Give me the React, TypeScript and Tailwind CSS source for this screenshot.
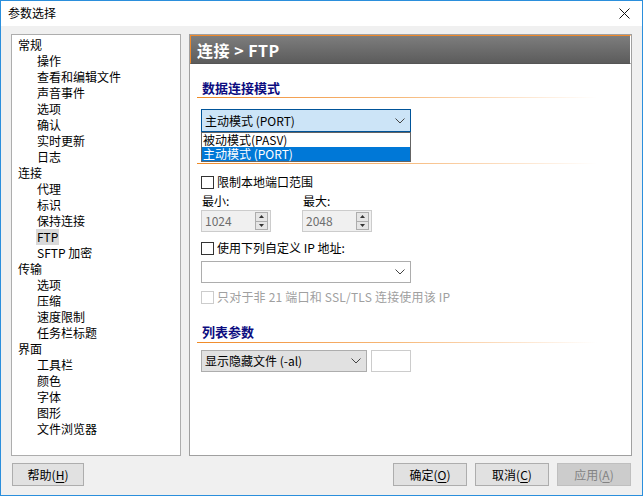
import React from 'react';

type TreeItem = { label: string; level: 0 | 1; selected?: boolean };

const tree: TreeItem[] = [
  { label: '常规', level: 0 },
  { label: '操作', level: 1 },
  { label: '查看和编辑文件', level: 1 },
  { label: '声音事件', level: 1 },
  { label: '选项', level: 1 },
  { label: '确认', level: 1 },
  { label: '实时更新', level: 1 },
  { label: '日志', level: 1 },
  { label: '连接', level: 0 },
  { label: '代理', level: 1 },
  { label: '标识', level: 1 },
  { label: '保持连接', level: 1 },
  { label: 'FTP', level: 1, selected: true },
  { label: 'SFTP 加密', level: 1 },
  { label: '传输', level: 0 },
  { label: '选项', level: 1 },
  { label: '压缩', level: 1 },
  { label: '速度限制', level: 1 },
  { label: '任务栏标题', level: 1 },
  { label: '界面', level: 0 },
  { label: '工具栏', level: 1 },
  { label: '颜色', level: 1 },
  { label: '字体', level: 1 },
  { label: '图形', level: 1 },
  { label: '文件浏览器', level: 1 },
];

const Chevron = () => (
  <svg width="10" height="6" viewBox="0 0 10 6" className="shrink-0">
    <polyline points="0.5,0.5 5,5 9.5,0.5" fill="none" stroke="#444" strokeWidth="1" />
  </svg>
);

const Checkbox = ({ disabled }: { disabled?: boolean }) => (
  <span
    className={`inline-block w-[13px] h-[13px] border shrink-0 bg-white ${
      disabled ? 'border-[#cccccc]' : 'border-[#333333]'
    }`}
  />
);

const Spin = ({ value }: { value: string }) => (
  <div className="w-[70px] h-[22px] border border-[#cccccc] bg-[#f0f0f0] flex items-center justify-between pl-[3px] pr-[2px]">
    <span className="text-[#6d6d6d]">{value}</span>
    <div className="w-[13px] h-[18px] flex flex-col border border-[#adadad] bg-[#e5e5e5]">
      <div className="flex-1 flex items-center justify-center border-b border-[#adadad]">
        <svg width="5" height="3" viewBox="0 0 5 3"><polygon points="2.5,0 5,3 0,3" fill="#333" /></svg>
      </div>
      <div className="flex-1 flex items-center justify-center">
        <svg width="5" height="3" viewBox="0 0 5 3"><polygon points="0,0 5,0 2.5,3" fill="#333" /></svg>
      </div>
    </div>
  </div>
);

const SectionLine = () => (
  <div className="h-px w-[400px] bg-linear-to-r from-[#f08a24] via-[#f6b878] to-white" />
);

const Button = ({ label, hotkey, disabled, width }: { label: string; hotkey: string; disabled?: boolean; width: string }) => (
  <div
    className={`${width} h-[23px] flex items-center justify-center border ${
      disabled ? 'bg-[#cccccc] border-[#bfbfbf] text-[#838383]' : 'bg-[#e1e1e1] border-[#adadad] text-black'
    }`}
  >
    {label}(<span className="underline underline-offset-2">{hotkey}</span>)
  </div>
);

const App: React.FC = () => {
  return (
    <div className="w-[644px] h-[499px] bg-white font-['Noto_Sans_CJK_SC','Microsoft_YaHei',sans-serif] text-[12px] leading-[16px] text-black">
      <div className="w-[643px] h-[496px] border border-[#2b8fdc] bg-[#f0f0f0] flex flex-col">
        {/* Title bar */}
        <div className="h-[25px] bg-white flex items-center justify-between pl-[7px] pr-[12px] shrink-0">
          <span className="text-[12px] -mt-[1px]">参数选择</span>
          <svg width="11" height="11" viewBox="0 0 11 11">
            <line x1="0.5" y1="0.5" x2="10.5" y2="10.5" stroke="#111" strokeWidth="1" />
            <line x1="10.5" y1="0.5" x2="0.5" y2="10.5" stroke="#111" strokeWidth="1" />
          </svg>
        </div>

        <div className="flex-1 px-[10px] pt-[8px] flex flex-col">
          <div className="flex gap-[8px] h-[422px]">
            {/* Tree */}
            <div className="w-[170px] h-full bg-white border border-[#adadad] pt-[2px] pl-[5px]">
              {tree.map((item, i) => (
                <div key={i} className={`h-[16px] flex items-center ${item.level === 1 ? 'pl-[19px]' : ''}`}>
                  <span className={`px-[1px] ${item.selected ? 'bg-[#d9d9d9]' : ''}`}>{item.label}</span>
                </div>
              ))}
            </div>

            {/* Right panel */}
            <div className="w-[443px] h-full bg-white border border-[#a0a0a0] flex flex-col">
              <div className="h-[29px] border-t border-l border-[#f0892a] border-r-white border-b-[#555] border-r border-b bg-linear-to-b from-[#7d7d7d] to-[#5c5c5c] flex items-center pl-[6px]">
                <span className="text-white font-bold text-[16px] leading-[20px] tracking-[0.5px]">连接 &gt; FTP</span>
              </div>

              <div className="pl-[7px] flex flex-col">
                <div className="mt-[16px] pl-[5px] h-[16px] flex items-center text-[13px] font-bold text-[#0c0c80]">数据连接模式</div>
                <div className="mt-[1px]"><SectionLine /></div>

                <div className="relative mt-[11px] ml-[4px] w-[210px]">
                  <div className="h-[23px] border border-[#005499] bg-[#cce4f7] flex items-center justify-between pl-[3px] pr-[5px]">
                    <span>主动模式 (PORT)</span>
                    <Chevron />
                  </div>
                  <div className="absolute left-0 top-full w-[210px] border border-[#646464] bg-white z-10">
                    <div className="h-[14px] leading-[14px] flex items-center pl-[1px]">被动模式(PASV)</div>
                    <div className="h-[14px] leading-[14px] flex items-center pl-[1px] bg-[#0078d7] text-white">主动模式 (PORT)</div>
                  </div>
                </div>

                <div className="mt-[31px]"><SectionLine /></div>

                <div className="mt-[10px] ml-[4px] h-[16px] flex items-center gap-[3px]">
                  <Checkbox />
                  <span>限制本地端口范围</span>
                </div>

                <div className="mt-[3px] ml-[5px] h-[16px] flex">
                  <span className="w-[101px]">最小:</span>
                  <span>最大:</span>
                </div>

                <div className="mt-[1px] ml-[4px] flex gap-[31px]">
                  <Spin value="1024" />
                  <Spin value="2048" />
                </div>

                <div className="mt-[8px] ml-[4px] h-[16px] flex items-center gap-[3px]">
                  <Checkbox />
                  <span>使用下列自定义 IP 地址:</span>
                </div>

                <div className="mt-[5px] ml-[4px] w-[210px] h-[22px] border border-[#adadad] bg-white flex items-center justify-end pr-[5px]">
                  <Chevron />
                </div>

                <div className="mt-[6px] ml-[4px] h-[16px] flex items-center gap-[3px] text-[#a0a0a0]">
                  <Checkbox disabled />
                  <span className="tracking-[0.2px]">只对于非 21 端口和 SSL/TLS 连接使用该 IP</span>
                </div>

                <div className="mt-[19px] pl-[5px] h-[16px] flex items-center text-[13px] font-bold text-[#0c0c80]">列表参数</div>
                <div className="mt-[2px]"><SectionLine /></div>

                <div className="mt-[7px] ml-[4px] flex gap-[4px]">
                  <div className="w-[166px] h-[22px] border border-[#adadad] bg-[#e1e1e1] flex items-center justify-between pl-[3px] pr-[5px]">
                    <span>显示隐藏文件 (-al)</span>
                    <Chevron />
                  </div>
                  <div className="w-[40px] h-[22px] border border-[#cccccc] bg-white" />
                </div>
              </div>
            </div>
          </div>

          {/* Buttons */}
          <div className="mt-[7px] flex items-center">
            <div className="ml-[1px]">
              <Button label="帮助" hotkey="H" width="w-[72px]" />
            </div>
            <div className="ml-auto mr-[1px] flex gap-[8px]">
              <Button label="确定" hotkey="O" width="w-[74px]" />
              <Button label="取消" hotkey="C" width="w-[74px]" />
              <Button label="应用" hotkey="A" width="w-[74px]" disabled />
            </div>
          </div>
        </div>
      </div>
    </div>
  );
};

export default App;
